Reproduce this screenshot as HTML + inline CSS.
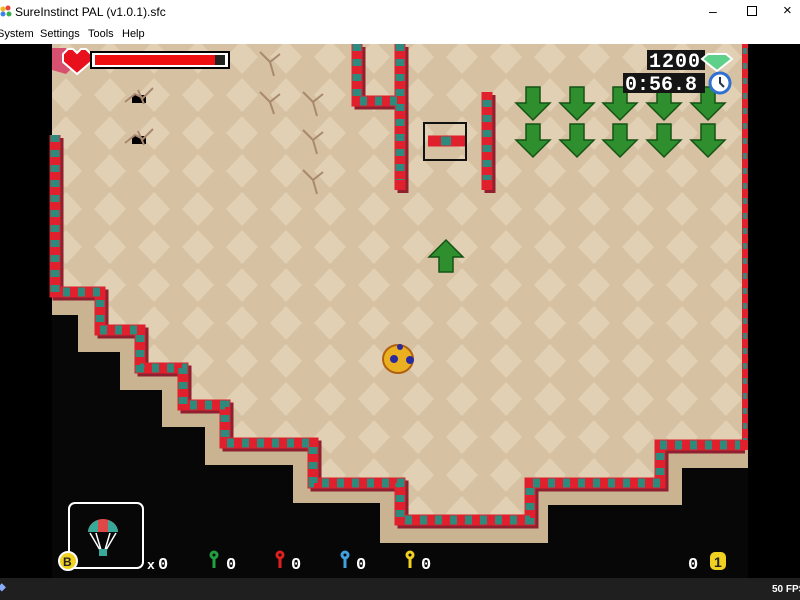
<!DOCTYPE html>
<html><head><meta charset="utf-8"><style>
*{margin:0;padding:0;box-sizing:border-box}
body{width:800px;height:600px;overflow:hidden;background:#000;font-family:"Liberation Sans",sans-serif;position:relative}
#title{position:absolute;left:0;top:0;width:800px;height:24px;background:#fff;font-size:12px;color:#000}
#menu{position:absolute;left:0;top:24px;width:800px;height:20px;background:#fff;font-size:11px;color:#000}
#status{position:absolute;left:0;top:578px;width:800px;height:22px;background:#1f1f1f;color:#fff;font-size:10px;font-weight:bold;white-space:nowrap}
svg{position:absolute;left:0;top:44px}
</style></head><body>
<div id="title">
<svg width="14" height="14" style="left:0;top:5px" viewBox="0 0 14 14"><circle cx="3" cy="4" r="2.5" fill="#f2b21b"/><circle cx="8" cy="3" r="2.5" fill="#e9423b"/><circle cx="3" cy="9" r="2.5" fill="#3b82e9"/><circle cx="9" cy="9" r="2.5" fill="#37b24d"/></svg>
<span style="position:absolute;left:15px;top:5px">SureInstinct PAL (v1.0.1).sfc</span>
<span style="position:absolute;left:709px;top:3px;font-size:14px">&#8211;</span>
<span style="position:absolute;left:747px;top:6px;width:10px;height:10px;border:1px solid #000"></span>
<span style="position:absolute;left:783px;top:2px;font-size:15px">&#215;</span>
</div>
<div id="menu">
<span style="position:absolute;left:-3px;top:4px">System</span>
<span style="position:absolute;left:40px;top:4px">Settings</span>
<span style="position:absolute;left:88px;top:4px">Tools</span>
<span style="position:absolute;left:122px;top:4px">Help</span>
</div>
<svg width="800" height="534" viewBox="0 44 800 534">
<defs>
<pattern id="chk" x="0" y="0" width="44" height="38" patternUnits="userSpaceOnUse">
<rect width="44" height="38" fill="#d6c2a2"/>
<polygon points="22,2 38,19 22,36 6,19" fill="#e1d0b3"/>
</pattern>
</defs>
<rect x="52" y="44" width="696" height="534" fill="#070707"/>
<polygon points="52,44 748,44 748,468 682,468 682,505 548,505 548,543 380,543 380,503 293,503 293,465 205,465 205,427 162,427 162,390 120,390 120,352 78,352 78,315 52,315" fill="#c9b390"/>
<polygon points="52,44 745,44 745,445 660,445 660,483 530,483 530,520 400,520 400,483 313,483 313,443 225,443 225,405 183,405 183,368 140,368 140,330 100,330 100,292 55,292 55,135 52,135" fill="url(#chk)"/>
<g fill="none" stroke-linejoin="miter">
<g stroke="#8e2030" stroke-width="11" transform="translate(3,3)">
<polyline points="55,135 55,292 100,292 100,330 140,330 140,368 183,368 183,405 225,405 225,443 313,443 313,483 400,483 400,520 530,520 530,483 660,483 660,445 742,445"/>
<polyline points="357,44 357,101 400,101"/><polyline points="400,44 400,190"/><polyline points="487,92 487,190"/>
</g>
<g stroke="#e0202c" stroke-width="11">
<polyline points="55,135 55,292 100,292 100,330 140,330 140,368 183,368 183,405 225,405 225,443 313,443 313,483 400,483 400,520 530,520 530,483 660,483 660,445 745,445"/>
<polyline points="357,44 357,101 400,101"/><polyline points="400,44 400,190"/><polyline points="487,92 487,190"/>
<line x1="428" y1="141" x2="466" y2="141"/>
</g>
<line x1="745" y1="44" x2="745" y2="450" stroke="#e0202c" stroke-width="6"/>
<g stroke="#2e8a7c" stroke-width="9" stroke-dasharray="7,8">
<polyline points="55,135 55,292 100,292 100,330 140,330 140,368 183,368 183,405 225,405 225,443 313,443 313,483 400,483 400,520 530,520 530,483 660,483 660,445 740,445"/>
<polyline points="357,44 357,101 400,101"/><polyline points="400,44 400,180"/><polyline points="487,100 487,180"/>
<line x1="441" y1="141" x2="451" y2="141" stroke-dasharray="none"/>
</g>
<line x1="745" y1="48" x2="745" y2="440" stroke="#2e8a7c" stroke-width="4" stroke-dasharray="6,9"/>
</g>
<rect x="424" y="123" width="42" height="37" fill="none" stroke="#111" stroke-width="2"/>
<g fill="#000"><rect x="132" y="95" width="14" height="8"/><rect x="132" y="136" width="14" height="8"/></g>
<g stroke="#a88870" stroke-width="2" fill="none">
<path d="M125,102 l10,-8 l8,4 l10,-10 M138,90 l6,14"/><path d="M125,143 l10,-8 l8,4 l10,-10 M138,131 l6,14"/>
<path d="M260,52 l10,10 l10,-8 M270,62 l4,14"/><path d="M260,92 l10,10 l10,-8 M270,102 l4,12"/>
<path d="M303,92 l10,10 l10,-8 M313,102 l4,14"/><path d="M303,130 l10,10 l10,-8 M313,140 l4,14"/><path d="M303,170 l10,10 l10,-8 M313,180 l4,14"/>
</g>
<g fill="#2f8f2f" stroke="#145214" stroke-width="1.5">
<g id="ar"><path d="M526,87 h14 v16 h10 l-17,17 l-17,-17 h10 z"/></g>
<use href="#ar" x="44"/><use href="#ar" x="87"/><use href="#ar" x="131"/><use href="#ar" x="175"/>
<use href="#ar" y="37"/><use href="#ar" x="44" y="37"/><use href="#ar" x="87" y="37"/><use href="#ar" x="131" y="37"/><use href="#ar" x="175" y="37"/>
<path d="M439,272 h14 v-15 h10 l-17,-17 l-17,17 h10 z"/>
</g>
<ellipse cx="398" cy="359" rx="15" ry="14" fill="#eab020" stroke="#b06010" stroke-width="2"/>
<circle cx="394" cy="359" r="4" fill="#2a2aa0"/><circle cx="410" cy="360" r="4" fill="#2a2aa0"/><circle cx="400" cy="347" r="3" fill="#2a2aa0"/>
<path d="M52,48 l14,0 l8,18 l-8,8 l-14,-4 z" fill="#d85070"/>
<path d="M77,74 l-14,-12 v-8 l5,-5 h5 l4,4 l4,-4 h5 l5,5 v8 z" fill="#e8101c" stroke="#fff" stroke-width="2"/>
<rect x="91" y="52" width="138" height="16" fill="#fff" stroke="#000" stroke-width="2"/>
<rect x="95" y="55" width="120" height="10" fill="#ee1010"/><rect x="215" y="55" width="10" height="10" fill="#222"/>
<rect x="647" y="50" width="58" height="20" fill="#151515"/>
<text x="649" y="67" font-family="Liberation Mono" font-weight="bold" font-size="20" fill="#fff" letter-spacing="1">1200</text>
<path d="M708,54 h18 l6,5 l-15,12 l-15,-12 z" fill="#5ed08a" stroke="#fff" stroke-width="2"/>
<rect x="623" y="73" width="82" height="20" fill="#151515"/>
<text x="625" y="90" font-family="Liberation Mono" font-weight="bold" font-size="20" fill="#fff">0:56.8</text>
<circle cx="720" cy="83" r="10" fill="#fff" stroke="#3070d0" stroke-width="3"/><path d="M720,77 v6 l4,4" stroke="#234" stroke-width="2" fill="none"/>
<rect x="69" y="503" width="74" height="65" rx="6" fill="none" stroke="#fff" stroke-width="2"/>
<path d="M88,532 a15,13 0 0 1 30,0 z" fill="#e04848"/><path d="M88,532 a15,13 0 0 1 10,-12 v12 z M118,532 a15,13 0 0 0 -10,-12 v12 z" fill="#38a898"/>
<path d="M90,533 l10,17 M96,533 l5,17 M110,533 l-5,17 M116,533 l-10,17" stroke="#fff" stroke-width="1.5"/>
<rect x="99" y="549" width="8" height="7" fill="#38a898"/>
<circle cx="68" cy="561" r="9" fill="#f0d020" stroke="#fff" stroke-width="2"/>
<text x="63" y="566" font-size="12" font-weight="bold" fill="#222">B</text>
<g font-family="Liberation Mono" font-weight="bold" font-size="17" fill="#fff">
<text x="147" y="569" font-size="13">x</text><text x="158" y="569">0</text>
<text x="226" y="569">0</text><text x="291" y="569">0</text><text x="356" y="569">0</text><text x="421" y="569">0</text>
<text x="688" y="569">0</text>
</g>
<g stroke-width="3" fill="none">
<circle cx="214" cy="555" r="3" stroke="#20a040"/><line x1="214" y1="558" x2="214" y2="568" stroke="#20a040"/>
<circle cx="280" cy="555" r="3" stroke="#e02020"/><line x1="280" y1="558" x2="280" y2="568" stroke="#e02020"/>
<circle cx="345" cy="555" r="3" stroke="#40a0e0"/><line x1="345" y1="558" x2="345" y2="568" stroke="#40a0e0"/>
<circle cx="410" cy="555" r="3" stroke="#f0d020"/><line x1="410" y1="558" x2="410" y2="568" stroke="#f0d020"/>
</g>
<rect x="710" y="552" width="16" height="18" rx="5" fill="#f0d020"/>
<text x="714" y="567" font-size="14" font-weight="bold" fill="#222">1</text>
</svg>
<div id="status"><span style="position:absolute;left:-2px;top:4px;color:#8af">&#9670;</span><span style="position:absolute;left:772px;top:6px">50 FPS</span></div>
</body></html>
